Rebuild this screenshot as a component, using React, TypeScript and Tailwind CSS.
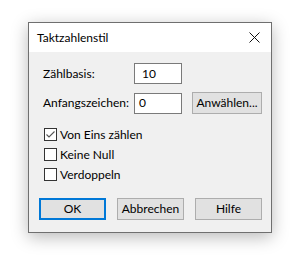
import React from "react";

const font = { fontFamily: 'Lato, "Liberation Sans", sans-serif' };

function Check({ checked, label }: { checked?: boolean; label: string }) {
  return (
    <div className="flex h-[13px] items-center">
      <div className="flex h-[13px] w-[13px] items-center justify-center border border-[#333333] bg-white">
        {checked && (
          <svg width="11" height="11" viewBox="0 0 11 11">
            <path d="M1.5 5.5 L4 8 L9.5 2.5" fill="none" stroke="#555" strokeWidth="1.1" />
          </svg>
        )}
      </div>
      <span className="ml-[3px] text-[12px] leading-[13px] text-black">{label}</span>
    </div>
  );
}

function Btn({ label, primary }: { label: string; primary?: boolean }) {
  return (
    <div
      className={
        "flex h-[22px] w-[67px] items-center justify-center bg-[#e1e1e1] text-[12px] text-black " +
        (primary ? "border-2 border-[#0078d7]" : "border border-[#adadad]")
      }
    >
      {label}
    </div>
  );
}

export default function App() {
  return (
    <div className="h-[257px] w-[294px] bg-white pl-[28px] pt-[22px]" style={font}>
      <div className="flex h-[211px] w-[244px] flex-col border border-[#6f6f6f] shadow-[0_4px_16px_rgba(0,0,0,0.28)]">
        <div className="flex h-[29px] items-center justify-between bg-white pl-[8px] pr-[11px]">
          <span className="text-[12px] text-black">Taktzahlenstil</span>
          <svg width="11" height="11" viewBox="0 0 11 11">
            <path d="M0.5 0.5 L10.5 10.5 M10.5 0.5 L0.5 10.5" stroke="#111" strokeWidth="1" />
          </svg>
        </div>
        <div className="flex flex-1 flex-col bg-[#f0f0f0] pl-[14px]">
          <div className="mt-[11px] flex h-[21px] items-center">
            <span className="w-[91px] text-[12px] text-black">Zählbasis:</span>
            <div className="flex h-[21px] w-[48px] items-center border border-[#7a7a7a] bg-white pl-[7px] text-[12px] text-black">
              10
            </div>
          </div>
          <div className="mt-[8px] flex h-[22px] items-center">
            <span className="w-[91px] text-[12px] text-black">Anfangszeichen:</span>
            <div className="flex h-[21px] w-[48px] items-center border border-[#7a7a7a] bg-white pl-[4px] text-[12px] text-black">
              0
            </div>
            <div className="ml-[10px] flex h-[22px] w-[70px] items-center justify-center border border-[#adadad] bg-[#e1e1e1] text-[12px] text-black">
              Anwählen...
            </div>
          </div>
          <div className="ml-[1px] mt-[14px] flex flex-col gap-[7px]">
            <Check checked label="Von Eins zählen" />
            <Check label="Keine Null" />
            <Check label="Verdoppeln" />
          </div>
          <div className="ml-[-4px] mt-[17px] flex gap-[11px]">
            <Btn label="OK" primary />
            <Btn label="Abbrechen" />
            <Btn label="Hilfe" />
          </div>
        </div>
      </div>
    </div>
  );
}
